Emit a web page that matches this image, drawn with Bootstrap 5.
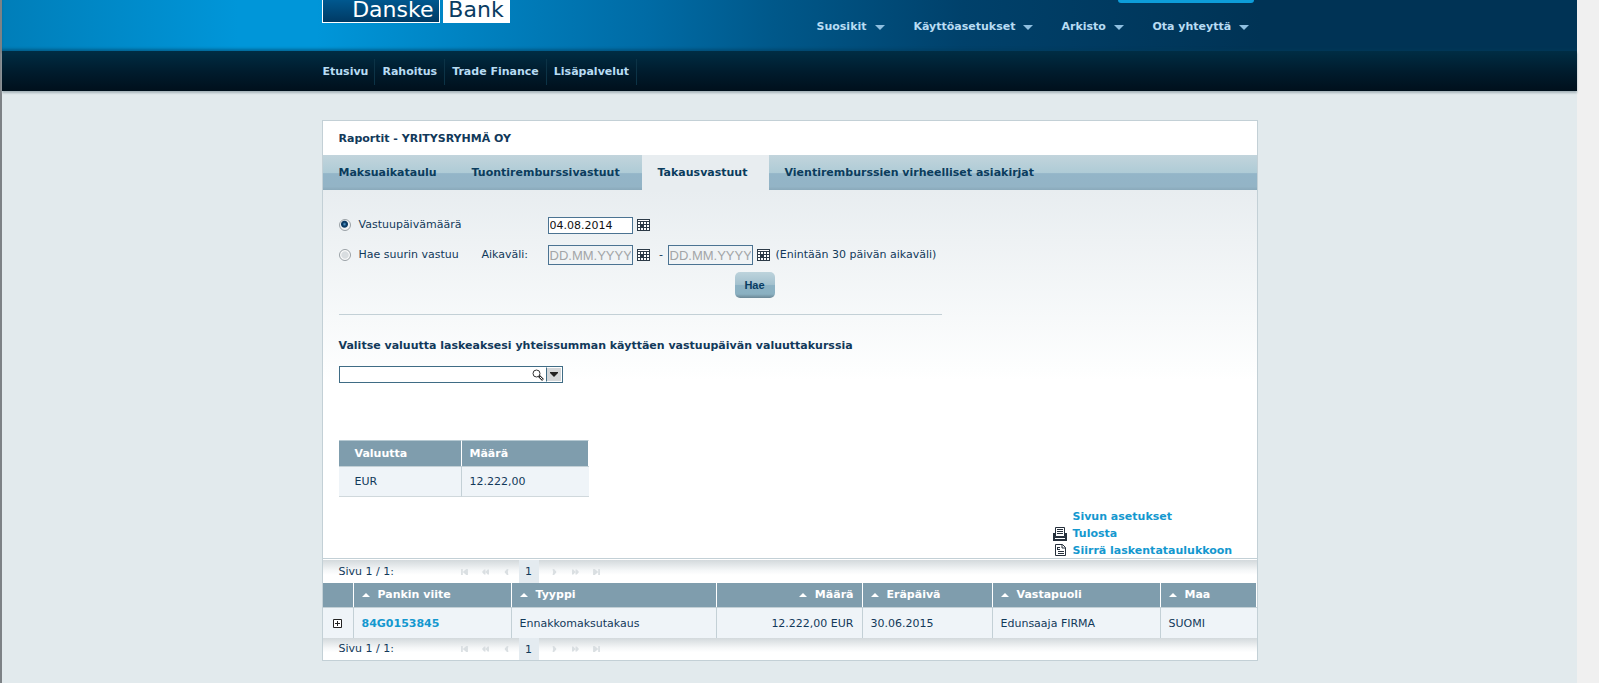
<!DOCTYPE html>
<html lang="fi">
<head>
<meta charset="utf-8">
<meta name="viewport" content="width=device-width, initial-scale=1">
<title>Danske Bank - Raportit</title>
<link rel="stylesheet" href="https://cdn.jsdelivr.net/npm/bootstrap@5.3.0/dist/css/bootstrap.min.css">
<style>
:root { --navy: #12395a; --steel: #7f9dad; --line: #c3d0d6; --cyan: #1498cf; }
html { background: #f0f0f0; }
body { font: 11px/16px "DejaVu Sans", sans-serif; color: var(--navy); background: #f0f0f0; }
a { text-decoration: none; color: inherit; }
.page { margin-right: 22px; min-height: 100vh; border-left: 2px solid #7d8286; background: #e2eaed; }
.wrap { width: 936px; max-width: 100%; margin-inline: auto; }
.masthead { height: 51px; background: linear-gradient(90deg, #007eb9 0, #0096d9 15%, #0096d9 20%, #006ba5 41%, #00588a 49%, #00416b 61%, #003355 80%, #003355 100%); box-shadow: inset 0 -3px 3px -1px rgba(0, 60, 90, .5); }
.brand { height: 23px; font-size: 22px; line-height: 20px; gap: 3px; }
.brand span { height: 23px; }
.brand-a { width: 118px; padding-right: 5px; color: #fff; text-align: right; border: 1px solid #fff; border-top: 0; background: linear-gradient(#00588f, #003a64); }
.brand-b { width: 67px; text-align: center; color: #0a3c62; background: #fff; }
.logoff { width: 136px; height: 3px; margin-right: 4px; background: #0d9dd9; border-radius: 0 0 5px 5px; }
.tools { gap: 29px; margin: 16px 9px 0 0; font-weight: 700; color: #b8dcf3; }
.tools a { display: flex; align-items: center; justify-content: space-between; }
.tools a::after { content: ""; border: 5px solid transparent; border-top-color: #8fbfe0; border-bottom: 0; }
.w-xs { width: 62px; } .w-s { width: 68px; } .w-m { width: 96px; } .w-l { width: 119px; }
.mainnav { height: 40px; background: linear-gradient(#002d44, #001b2c 55%, #00101c); box-shadow: 0 2px 2px #a7b5bb; }
.mainnav ul { font-weight: 700; color: #b8dcf3; height: 40px; padding-top: 1px; }
.mainnav li { padding: 5px 6px; border-right: 1px solid #0c3346; height: 26px; }
.mainnav li + li { padding-inline: 7px; }
.mainnav li:first-child { padding-left: 1px; }
.panel { margin-top: 29px; border: 1px solid var(--line); background: #fff; }
.panel h1 { font-size: 11px; line-height: 16px; font-weight: 700; margin: 0; padding: 10px 16px 8px; }
.tabs { height: 35px; background: linear-gradient(#c2d4dc, #aecbd6 52%, #93b5c8 53%, #93b4c6 90%, #8aa9ba); font-weight: 700; }
.tabs a { padding: 10px 16px 9px; color: #0b3c5d; }
.tabs a.active { background: #e8edf0; }
.t1 { width: 133px; } .t2 { width: 186px; } .t3 { width: 127px; }
.content { padding: 25px 15px 0 16px; background: linear-gradient(#e8edf0, #fdfefe 180px, #fff 190px); }
.filters { width: 603px; max-width: 100%; border-bottom: 1px solid var(--line); padding-bottom: 16px; }
.frow { height: 30px; }
.frow:first-child { height: 20px; margin-bottom: 5px; }
.frow > * { flex-shrink: 0; }
.radio { appearance: none; width: 12px; height: 12px; margin: 0 8px 0 0; border: 1px solid #9aa1a6; border-radius: 50%; background: radial-gradient(circle, #d9dde0 45%, #fafafa 60%); }
.radio:checked { background: radial-gradient(circle at 45% 42%, #5aa0d2 0, #0b3a63 2px, #0b3a63 3px, #f2f2f2 4px); }
.opt-wide { width: 189px; }
.opt { width: 123px; }
.opt2 { width: 66px; }
.dash { width: 18px; text-align: center; padding-left: 5px; }
.date { width: 85px; height: 17px; padding: 0 1px; border: 1px solid #4b7392; font-size: 11px; color: #111; background: #fff; border-radius: 0; }
.date.off { height: 20px; font: 13px "Liberation Sans", sans-serif; background: transparent; }
.date.off::placeholder { color: #a3a5a7; opacity: 1; }
.iconbtn { border: 0; background: none; padding: 0; margin-left: 4px; display: flex; }
.note { margin-left: 6px; }
.go { width: 40px; height: 26px; padding: 0; font: 700 11px/24px "Liberation Sans", sans-serif; color: #083c62; border: 0; border-radius: 5px; background: linear-gradient(#bdd3dc, #a3c1ce 48%, #8db2c4 50%, #8ab0c1 85%, #6b8795); margin-left: 396px; margin-top: 2px; }
.subhead { font-size: 11px; line-height: 16px; font-weight: 700; margin: 23px 0 12px; }
.combo { width: 224px; height: 17px; border: 1px solid #3f6c85; background: #fff; }
.combo input { flex: 1; min-width: 0; height: 15px; border: 0; padding: 0 2px; background: transparent; outline: 0; }
.combo .lens { margin-right: 2px; }
.drop { width: 16px; height: 15px; border: 1px solid #fff; border-left: 1px solid #3f6c85; background: #d3d6d8; padding: 0; display: flex; align-items: center; justify-content: center; }
.datagrid { width: 100%; table-layout: fixed; border-collapse: separate; border-spacing: 0; }
.datagrid th { height: 24px; padding: 0 8px; color: #fff; background: var(--steel); border-right: 1px solid #fff; font-weight: 700; }
.datagrid td { height: 31px; padding: 1px 8px 0; background: #eff4f8; border: 1px solid var(--line); border-width: 1px 1px 0 0; }
.datagrid td:last-child { border-right: 0; }
.sums { width: 250px; margin-top: 57px; }
.sums th { height: 26px; border-top: 1px solid #b6c9d2; }
.sums td { border-bottom: 1px solid #d0d8dc; padding-top: 0; }
.sums th:first-child, .sums td:first-child { padding-left: 16px; }
.actions { font-weight: 700; line-height: 17px; color: var(--cyan); margin-top: 11px; margin-bottom: -1px; width: 189px; }
.actions a { display: grid; grid-template-columns: 14px 1fr; gap: 6px; align-items: center; }
.gridbox { border-top: 1px solid var(--line); padding-top: 1px; }
.pager { height: 23px; padding: 0 16px; background: linear-gradient(#d3d9dc, #f5f7f8 45%, #fff 65%); }
.pager.foot { height: 22px; }
.pager .where { width: 118px; }
.pager button { width: 21px; height: 21px; padding: 0 4px; border: 0; background: none; color: #dadfe2; display: flex; align-items: center; }
.pager button svg { width: 7px; height: 6px; }
.pager .cur { width: 20px; height: 100%; line-height: 23px; text-align: center; background: #e4ebf0; margin: 0 8px 0 -1px; }
.sort::before { content: ""; display: inline-block; border: 4px solid transparent; border-bottom-color: #fff; border-top: 0; margin-right: 8px; vertical-align: 1px; }
.ref { color: var(--cyan); font-weight: 700; }
</style>
</head>
<body>
<svg width="0" height="0" class="position-absolute" aria-hidden="true">
  <symbol id="cal" viewBox="0 0 13 12"><path fill="#2c3a47" d="M0 0h13v12H0z"/><path fill="#fff" d="M1 1h11v1H1zM1 3h2v2H1zM4 3h2v2H4zM7 3h2v2H7zM10 3h2v2h-2zM1 6h2v2H1zM7 6h2v2H7zM10 6h2v2h-2zM1 9h2v2H1zM4 9h2v2H4zM7 9h2v2H7zM10 9h2v2h-2z"/></symbol>
  <symbol id="first" viewBox="0 0 8 7"><path fill="currentColor" d="M0 0h2v7H0zM6 0h2v7H6L2 3.500z"/></symbol>
  <symbol id="rew" viewBox="0 0 9 7"><path fill="currentColor" d="M3 0h1.500v7H3L0 3.500zM7.500 0H9v7H7.500L4.500 3.500z"/></symbol>
  <symbol id="prev" viewBox="0 0 5 7"><path fill="currentColor" d="M3 0h2L4 3.500 5 7H3L0 3.500z"/></symbol>
</svg>
<div class="page">
  <header>
    <div class="masthead">
      <div class="wrap d-flex justify-content-between">
        <a href="#" class="brand d-flex"><span class="brand-a">Danske</span><span class="brand-b">Bank</span></a>
        <div class="d-flex flex-column align-items-end">
          <div class="logoff"></div>
          <nav class="tools d-flex" aria-label="Työkalut">
            <a href="#" class="w-s">Suosikit</a><a href="#" class="w-l">Käyttöasetukset</a><a href="#" class="w-xs">Arkisto</a><a href="#" class="w-m">Ota yhteyttä</a>
          </nav>
        </div>
      </div>
    </div>
    <nav class="mainnav" aria-label="Päävalikko">
      <ul class="wrap list-unstyled d-flex align-items-center mb-0">
        <li><a href="#">Etusivu</a></li><li><a href="#">Rahoitus</a></li><li><a href="#">Trade Finance</a></li><li><a href="#">Lisäpalvelut</a></li>
      </ul>
    </nav>
  </header>
  <main class="panel wrap">
    <h1>Raportit - YRITYSRYHMÄ OY</h1>
    <nav class="tabs d-flex" aria-label="Raportit">
      <a href="#" class="t1">Maksuaikataulu</a><a href="#" class="t2">Tuontiremburssivastuut</a><a href="#" class="t3 active" aria-current="page">Takausvastuut</a><a href="#">Vientiremburssien virheelliset asiakirjat</a>
    </nav>
    <div class="content">
      <form class="filters">
        <div class="frow d-flex align-items-center">
          <input class="radio" type="radio" name="haku" id="r1" checked><label for="r1" class="opt-wide">Vastuupäivämäärä</label>
          <input class="date" type="text" value="04.08.2014" aria-label="Vastuupäivämäärä">
          <button type="button" class="iconbtn" aria-label="Kalenteri"><svg width="13" height="12"><use href="#cal"/></svg></button>
        </div>
        <div class="frow d-flex align-items-center">
          <input class="radio" type="radio" name="haku" id="r2"><label for="r2" class="opt">Hae suurin vastuu</label>
          <label for="d1" class="opt2">Aikaväli:</label>
          <input class="date off" type="text" id="d1" placeholder="DD.MM.YYYY">
          <button type="button" class="iconbtn" aria-label="Kalenteri"><svg width="13" height="12"><use href="#cal"/></svg></button>
          <label for="d2" class="dash">-</label>
          <input class="date off" type="text" id="d2" placeholder="DD.MM.YYYY">
          <button type="button" class="iconbtn" aria-label="Kalenteri"><svg width="13" height="12"><use href="#cal"/></svg></button>
          <span class="note text-nowrap">(Enintään 30 päivän aikaväli)</span>
        </div>
        <button type="button" class="go d-block">Hae</button>
      </form>
      <h2 class="subhead"><label for="cur">Valitse valuutta laskeaksesi yhteissumman käyttäen vastuupäivän valuuttakurssia</label></h2>
      <div class="combo d-flex align-items-center">
        <input type="text" id="cur">
        <svg class="lens" width="12" height="12" viewBox="0 0 12 12" fill="none" stroke="#333" aria-hidden="true"><circle cx="4.500" cy="4.500" r="3.500"/><path d="M7 7l4 4" stroke-width="2.500"/><path stroke="#fff" d="M8 8l2.500 2.500"/></svg>
        <button type="button" class="drop" aria-label="Avaa"><svg width="8" height="5"><path fill="#222" d="M0 0h8v1L4 5 0 1z"/></svg></button>
      </div>
      <table class="datagrid sums">
        <colgroup><col style="width:123px"><col></colgroup>
        <thead><tr><th>Valuutta</th><th>Määrä</th></tr></thead>
        <tbody><tr><td>EUR</td><td>12.222,00</td></tr></tbody>
      </table>
      <div class="actions ms-auto">
        <a href="#"><span></span>Sivun asetukset</a>
        <a href="#"><svg width="14" height="14" viewBox="0 0 14 14"><path fill="#26303c" d="M0 6h2v3h10V6h2v8H0z"/><path fill="#fff" stroke="#26303c" d="M2.500.5h9v9h-9z"/><path stroke="#26303c" d="M4 2.500h6M4 4.500h6M4 6.500h6"/><path fill="#fff" d="M2 11h10v1H2z"/></svg>Tulosta</a>
        <a href="#"><svg width="14" height="13" viewBox="0 0 14 13"><path fill="#fff" stroke="#26303c" d="M2.500.5h7l3 3v8h-10z"/><path fill="none" stroke="#26303c" d="M9 .5v3.500h3.500M4 3.500h3M4.500 3v2.500M4 5.500h3M5 7.500h6M5 9.500h6"/></svg>Siirrä laskentataulukkoon</a>
      </div>
    </div>
    <div class="gridbox">
      <div class="pager d-flex align-items-center">
        <span class="where">Sivu 1 / 1:</span>
        <button type="button" aria-label="Ensimmäinen"><svg viewBox="0 0 8 7"><use href="#first" width="8" height="7"/></svg></button><button type="button" aria-label="Taaksepäin"><svg viewBox="0 0 9 7"><use href="#rew" width="9" height="7"/></svg></button><button type="button" aria-label="Edellinen"><svg viewBox="0 0 5 7"><use href="#prev" width="5" height="7"/></svg></button>
        <span class="cur">1</span>
        <button type="button" aria-label="Seuraava"><svg viewBox="0 0 5 7"><use href="#prev" width="5" height="7" transform="rotate(180 2.500 3.500)"/></svg></button><button type="button" aria-label="Eteenpäin"><svg viewBox="0 0 9 7"><use href="#rew" width="9" height="7" transform="rotate(180 4.500 3.500)"/></svg></button><button type="button" aria-label="Viimeinen"><svg viewBox="0 0 8 7"><use href="#first" width="8" height="7" transform="rotate(180 4 3.500)"/></svg></button>
      </div>
      <table class="datagrid">
        <colgroup><col style="width:31px"><col style="width:158px"><col style="width:205px"><col style="width:146px"><col style="width:130px"><col style="width:168px"><col></colgroup>
        <thead><tr><th></th><th class="sort">Pankin viite</th><th class="sort">Tyyppi</th><th class="sort text-end">Määrä</th><th class="sort">Eräpäivä</th><th class="sort">Vastapuoli</th><th class="sort">Maa</th></tr></thead>
        <tbody><tr>
          <td><button type="button" class="iconbtn m-0 mx-auto" aria-label="Näytä tiedot"><svg width="9" height="9"><path fill="#fff" stroke="#222" d="M.5.5h8v8h-8z"/><path stroke="#222" d="M2 4.500h5M4.500 2v5"/></svg></button></td>
          <td><a href="#" class="ref">84G0153845</a></td><td>Ennakkomaksutakaus</td><td class="text-end">12.222,00 EUR</td><td>30.06.2015</td><td>Edunsaaja FIRMA</td><td>SUOMI</td>
        </tr></tbody>
      </table>
      <div class="pager foot d-flex align-items-center">
        <span class="where">Sivu 1 / 1:</span>
        <button type="button" aria-label="Ensimmäinen"><svg viewBox="0 0 8 7"><use href="#first" width="8" height="7"/></svg></button><button type="button" aria-label="Taaksepäin"><svg viewBox="0 0 9 7"><use href="#rew" width="9" height="7"/></svg></button><button type="button" aria-label="Edellinen"><svg viewBox="0 0 5 7"><use href="#prev" width="5" height="7"/></svg></button>
        <span class="cur">1</span>
        <button type="button" aria-label="Seuraava"><svg viewBox="0 0 5 7"><use href="#prev" width="5" height="7" transform="rotate(180 2.500 3.500)"/></svg></button><button type="button" aria-label="Eteenpäin"><svg viewBox="0 0 9 7"><use href="#rew" width="9" height="7" transform="rotate(180 4.500 3.500)"/></svg></button><button type="button" aria-label="Viimeinen"><svg viewBox="0 0 8 7"><use href="#first" width="8" height="7" transform="rotate(180 4 3.500)"/></svg></button>
      </div>
    </div>
  </main>
</div>
<script src="https://cdn.jsdelivr.net/npm/bootstrap@5.3.0/dist/js/bootstrap.bundle.min.js"></script>
</body>
</html>
